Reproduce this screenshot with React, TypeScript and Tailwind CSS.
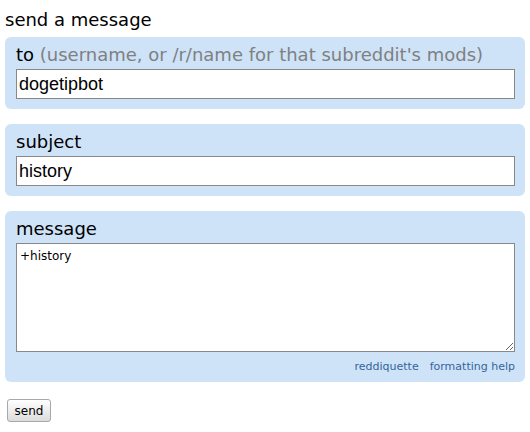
export default function App() {
  const verdana = { fontFamily: "Verdana, 'DejaVu Sans', sans-serif" };
  return (
    <div className="w-[530px] h-[432px] bg-white px-[5px] pt-[9px] text-black" style={verdana}>
      <h1 className="text-[18px] leading-[22px] font-normal">send a message</h1>

      <div className="mt-[6px] w-[520px] rounded-[6px] bg-[#cee3f8] pl-[11px] pr-[10px] pt-[7px] pb-[10px]">
        <label className="block text-[18px] leading-[22px]">
          to <span className="text-[#808080]">(username, or /r/name for that subreddit's mods)</span>
        </label>
        <input
          readOnly
          value="dogetipbot"
          className="mt-[3px] block h-[30px] w-[499px] border border-[#888] bg-white px-[2px] text-[18px] outline-none"
          style={{ fontFamily: "Arial, 'Liberation Sans', sans-serif" }}
        />
      </div>

      <div className="mt-[15px] w-[520px] rounded-[6px] bg-[#cee3f8] pl-[11px] pr-[10px] pt-[7px] pb-[10px]">
        <label className="block text-[18px] leading-[22px]">subject</label>
        <input
          readOnly
          value="history"
          className="mt-[3px] block h-[30px] w-[499px] border border-[#888] bg-white px-[2px] text-[18px] outline-none"
          style={{ fontFamily: "Arial, 'Liberation Sans', sans-serif" }}
        />
      </div>

      <div className="mt-[15px] w-[520px] rounded-[6px] bg-[#cee3f8] pl-[11px] pr-[10px] pt-[7px] pb-[8px]">
        <label className="block text-[18px] leading-[22px]">message</label>
        <textarea
          readOnly
          value="+history"
          className="mt-[3px] block h-[109px] w-[499px] resize-y border border-[#888] bg-white px-[3px] pt-[5px] text-[12px] leading-[14px] outline-none"
          style={verdana}
        />
        <div className="mt-[8px] flex justify-end gap-[11px] text-[11px] leading-[14px] text-[#336699]">
          <a href="#">reddiquette</a>
          <a href="#">formatting help</a>
        </div>
      </div>

      <button
        className="ml-[2px] mt-[17px] h-[23px] w-[44px] rounded-[3px] border border-[#a8a8a8] bg-gradient-to-b from-white to-[#dcdcdc] text-[12px] leading-[14px]"
        style={verdana}
      >
        send
      </button>
    </div>
  );
}
